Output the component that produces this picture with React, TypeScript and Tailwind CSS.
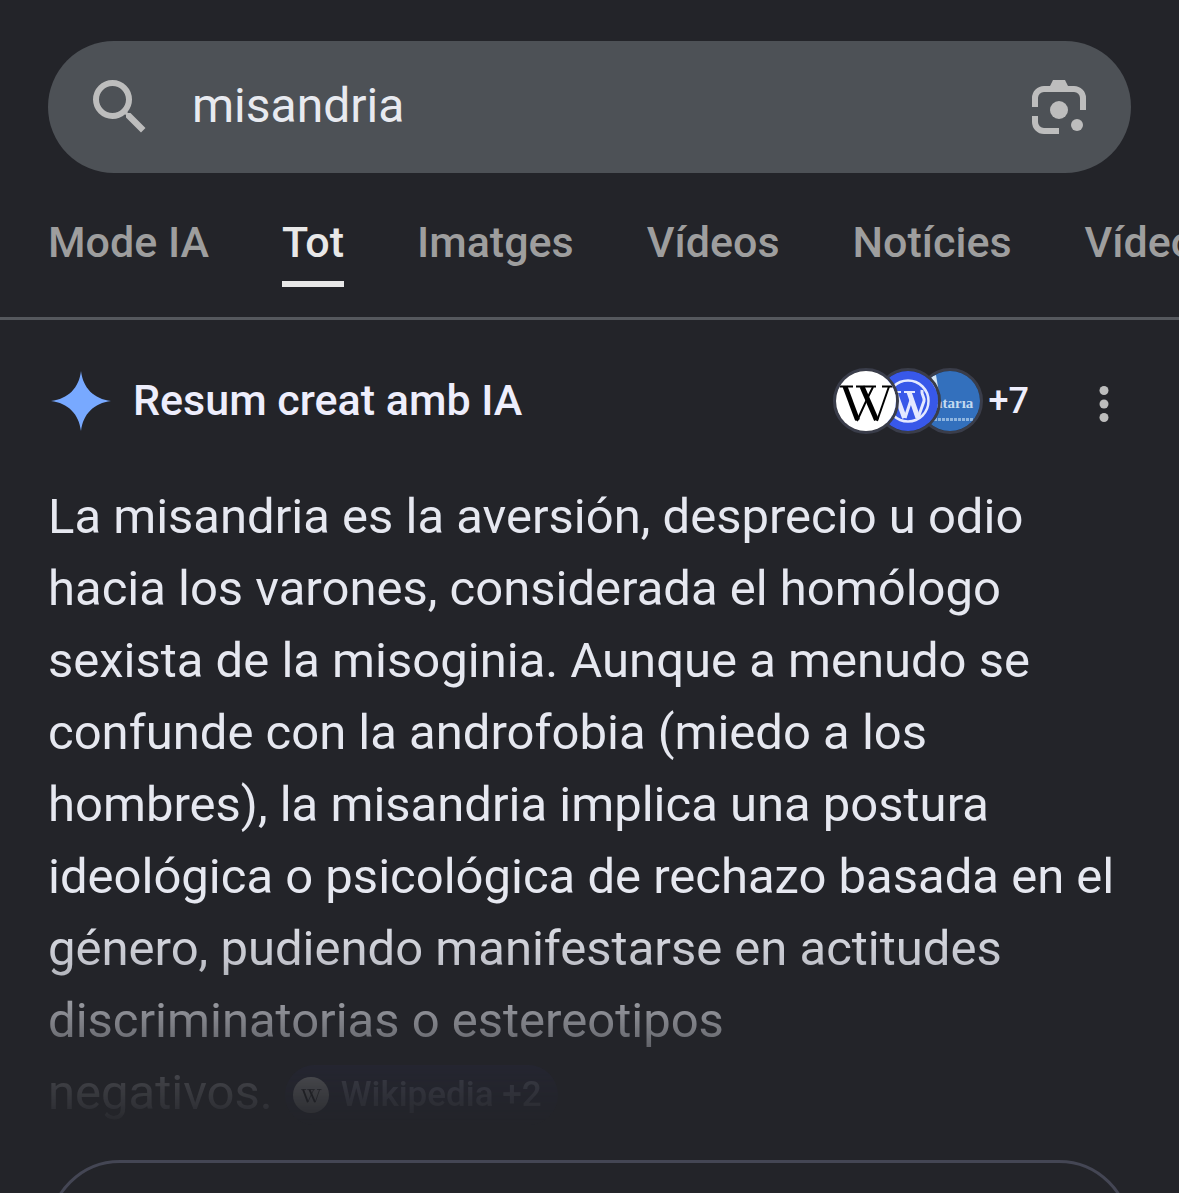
import type { ReactNode } from "react";

const tabs = [
  { label: "Mode IA", href: "#mode-ia" },
  { label: "Tot", href: "#tot", active: true },
  { label: "Imatges", href: "#imatges" },
  { label: "Vídeos", href: "#videos" },
  { label: "Notícies", href: "#noticies" },
  { label: "Vídeos curts", href: "#videos-curts" },
];

const summaryLines = [
  "La misandria es la aversión, desprecio u odio",
  "hacia los varones, considerada el homólogo",
  "sexista de la misoginia. Aunque a menudo se",
  "confunde con la androfobia (miedo a los",
  "hombres), la misandria implica una postura",
  "ideológica o psicológica de rechazo basada en el",
  "género, pudiendo manifestarse en actitudes",
  "discriminatorias o estereotipos",
];

function SearchIcon() {
  return (
    <svg viewBox="0 0 24 24" className="size-[72px] fill-[#bdbdbd]" aria-hidden="true">
      <path d="M15.5 14h-.79l-.28-.27A6.47 6.47 0 0 0 16 9.5 6.5 6.5 0 1 0 9.5 16c1.61 0 3.09-.59 4.23-1.57l.27.28v.79l5 4.99L20.49 19l-4.99-5zm-6 0C7.01 14 5 11.99 5 9.5S7.01 5 9.5 5 14 7.01 14 9.5 11.99 14 9.5 14z" />
    </svg>
  );
}

function LensIcon() {
  return (
    <svg viewBox="0 0 24 24" className="size-[72px] fill-[#bdbdbd]" aria-hidden="true">
      <path d="M3 12V9a4 4 0 0 1 4-4h2l1-2h4l1 2h2a4 4 0 0 1 4 4v4h-2V9a2 2 0 0 0-2-2H7a2 2 0 0 0-2 2v3z" />
      <path d="M3 15h2v2a2 2 0 0 0 2 2h5v2H7a4 4 0 0 1-4-4z" />
      <circle cx="12" cy="13" r="3" />
      <circle cx="18" cy="18" r="2" />
    </svg>
  );
}

function SparkIcon() {
  return (
    <svg viewBox="0 0 60 60" className="size-[60px] shrink-0 fill-[#78a9ff]" aria-hidden="true">
      <path d="M30 0C32 17 43 28 60 30 43 32 32 43 30 60 28 43 17 32 0 30 17 28 28 17 30 0z" />
    </svg>
  );
}

function MoreIcon() {
  return (
    <svg viewBox="0 0 24 24" className="size-[54px] fill-[#bdbdbd]" aria-hidden="true">
      <circle cx="12" cy="6" r="2" />
      <circle cx="12" cy="12" r="2" />
      <circle cx="12" cy="18" r="2" />
    </svg>
  );
}

/** Serif double-V mark used for Wikipedia. */
function WikipediaMark({ className, viewBox = "0 0 60 60" }: { className: string; viewBox?: string }) {
  return (
    <svg viewBox={viewBox} className={className} aria-hidden="true">
      <rect x="-20" y="-20" width="100" height="100" fill="#fff" />
      <g fill="none" stroke="#000">
        <path d="M9 15.500 21.500 49" strokeWidth="5" />
        <path d="M26 15.500 40.500 49" strokeWidth="5" />
        <path d="M21 50 32 26 37 16" strokeWidth="2" />
        <path d="M41 50 53 15.500" strokeWidth="2" />
        <path d="M4 15.500h13M20 15.500h20M46 15.500h12" strokeWidth="2" />
      </g>
    </svg>
  );
}

function WordPressMark() {
  return (
    <svg viewBox="0 0 60 60" className="size-full" aria-hidden="true">
      <rect width="60" height="60" fill="#3858e9" />
      <g fill="none" stroke="#e4e9ff">
        <circle cx="30" cy="30" r="20.500" strokeWidth="2.500" />
        <path d="M17 21 26.500 47M31 21l9 26" strokeWidth="5" />
        <path d="M27 47l6-18M40 47l6-17c1-4-3-6-2-11" strokeWidth="3" />
        <path d="M12 21h11M26 21h11" strokeWidth="2" />
      </g>
    </svg>
  );
}

function CatariaMark() {
  return (
    <svg viewBox="0 0 60 60" className="size-full" aria-hidden="true">
      <rect width="60" height="60" fill="#3370bd" />
      <path d="M10 6 16 4 19 22 12 15z" fill="#d5e6f4" />
      <text x="15" y="37" fontSize="15" fontWeight="700" fill="#c4daf0" fontFamily="Liberation Serif, serif">
        atarıa
      </text>
      <path d="M14 48.500h40" stroke="#8db4df" strokeWidth="3" strokeDasharray="3 1" />
    </svg>
  );
}

function SourceAvatar({ className, children }: { className: string; children: ReactNode }) {
  return (
    <span className={`relative block size-[66px] overflow-hidden rounded-full border-3 border-[#3a3d4a] ${className}`}>
      {children}
    </span>
  );
}

function SearchBar() {
  return (
    <form role="search" className="mx-12 flex h-[132px] items-center rounded-full bg-[#4d5156] px-9">
      <SearchIcon />
      <input
        type="text"
        aria-label="Cerca"
        defaultValue="misandria"
        className="ml-9 min-w-0 flex-1 bg-transparent pb-0.5 text-[48px] leading-[72px] text-[#e8eaf0] outline-none"
      />
      <button type="button" aria-label="Cerca per imatge">
        <LensIcon />
      </button>
    </form>
  );
}

function Tabs() {
  return (
    <nav className="mt-8 flex gap-[73px] overflow-hidden border-b-3 border-[#55585d] px-12 pb-[30px]">
      {tabs.map((tab) => (
        <a
          key={tab.label}
          href={tab.href}
          className={`shrink-0 border-b-6 pb-0.5 text-[43px] leading-[74px] font-medium whitespace-nowrap ${
            tab.active ? "border-[#e8e8e8] text-[#e8e8e8]" : "border-transparent text-[#9e9e9e]"
          }`}
        >
          {tab.label}
        </a>
      ))}
    </nav>
  );
}

function Overview() {
  return (
    <section className="px-12 pt-12">
      <div className="flex h-[66px] items-center">
        <div className="flex flex-1 items-center gap-[22px] pl-[3px]">
          <SparkIcon />
          <h2 className="pb-0.5 text-[43px] leading-[60px] font-medium text-[#eeeefc]">Resum creat amb IA</h2>
        </div>
        <button type="button" className="flex items-center" aria-label="Mostra les fonts">
          <SourceAvatar className="z-20">
            <WikipediaMark className="size-full" />
          </SourceAvatar>
          <SourceAvatar className="z-10 -ml-6">
            <WordPressMark />
          </SourceAvatar>
          <SourceAvatar className="-ml-6">
            <CatariaMark />
          </SourceAvatar>
          <span className="ml-1.5 text-[36px] font-medium text-[#eeeefc]">+7</span>
        </button>
        <button type="button" aria-label="Més opcions" className="mt-1.5 ml-12">
          <MoreIcon />
        </button>
      </div>

      {/* The last three lines fade out above the expand button. */}
      <p className="mt-[47px] text-[49px] leading-[72px] whitespace-nowrap text-[#e6e8f0] [mask-image:linear-gradient(to_bottom,#000_430px,rgb(0_0_0/0.82)_480px,rgb(0_0_0/0.6)_520px,rgb(0_0_0/0.38)_557px,rgb(0_0_0/0.14)_600px,rgb(0_0_0/0.06)_630px,transparent_648px)]">
        {summaryLines.map((line) => (
          <span key={line} className="block">
            {line}
          </span>
        ))}
        <span className="flex items-center gap-3">
          negativos.
          <a
            href="#wikipedia"
            className="mt-1 flex h-[60px] items-center gap-3 rounded-full bg-[#2a2c4c] px-2 pr-4 text-[35px] font-medium text-[#a0a4c8]"
          >
            <WikipediaMark viewBox="-18 -18 96 96" className="size-9 rounded-full" />
            Wikipedia +2
          </a>
        </span>
      </p>

      <button
        type="button"
        aria-label="Mostra'n més"
        className="mt-[31px] block h-36 w-full rounded-full border-3 border-[#444654]"
      />
    </section>
  );
}

export default function App() {
  return (
    <main className="h-screen overflow-hidden bg-[#232429] pt-[41px] font-['Roboto',sans-serif]">
      <SearchBar />
      <Tabs />
      <Overview />
    </main>
  );
}
